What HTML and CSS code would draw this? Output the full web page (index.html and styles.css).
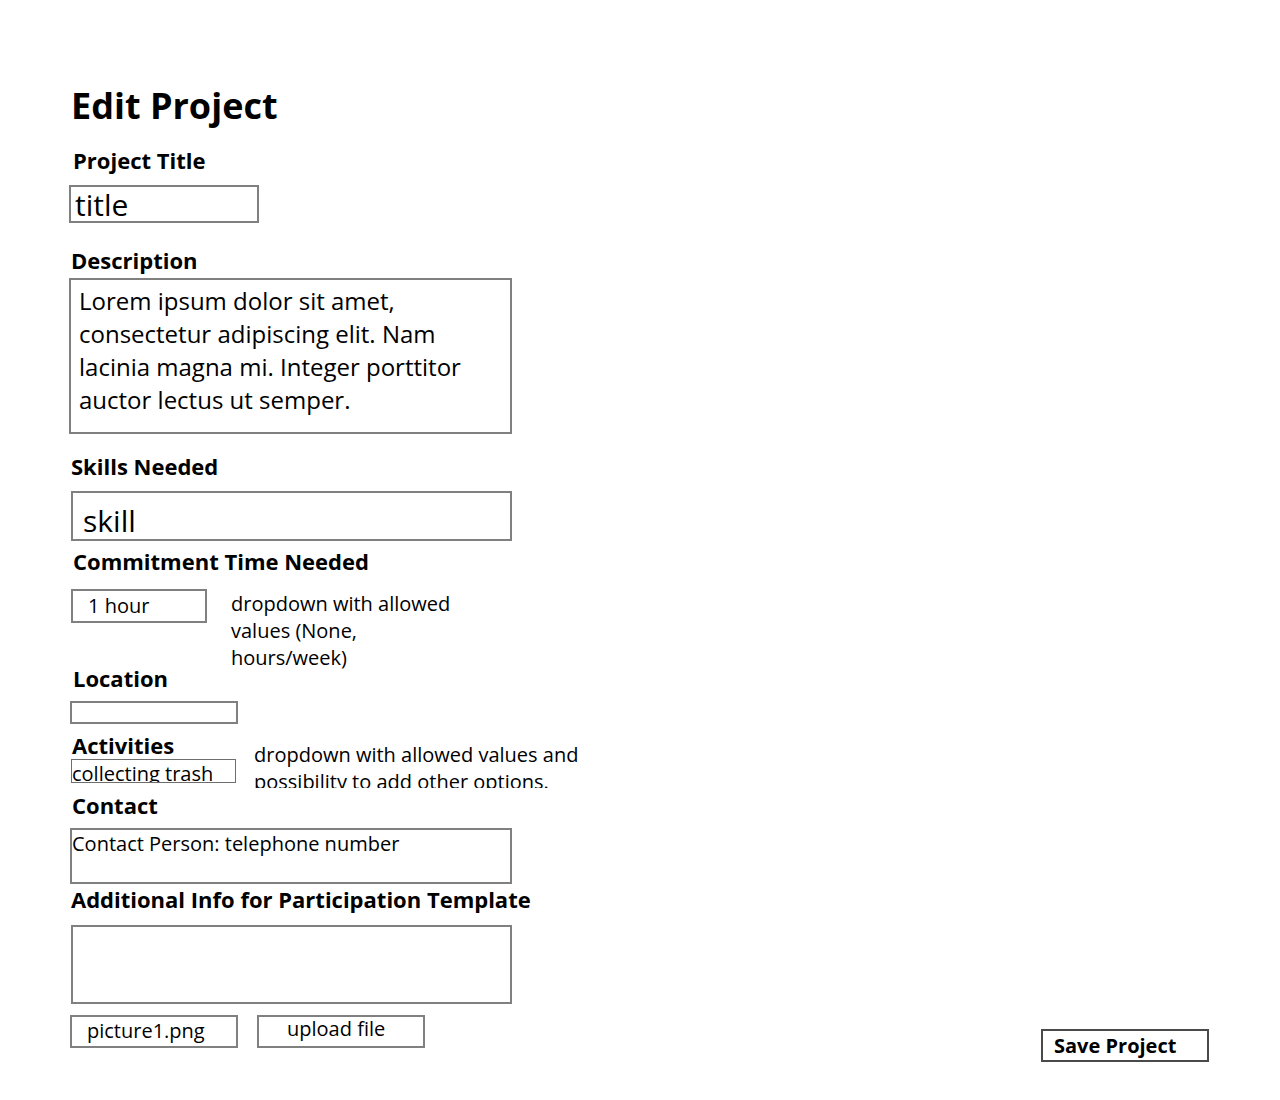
FILE: index.html
```html
<!DOCTYPE html>
<html lang="en">
<head>
<meta charset="utf-8">
<title>Edit Project</title>
<link rel="stylesheet" href="styles.css">
</head>
<body>
<main class="page">
  <h1 class="heading">Edit Project</h1>

  <div class="label lbl-project">Project Title</div>
  <div class="field f-title">title</div>

  <div class="label lbl-desc">Description</div>
  <div class="field f-desc">Lorem ipsum dolor sit amet, consectetur adipiscing elit. Nam lacinia magna mi. Integer porttitor auctor lectus ut semper.</div>

  <div class="label lbl-skills">Skills Needed</div>
  <div class="field f-skill">skill</div>

  <div class="label lbl-commit">Commitment Time Needed</div>
  <div class="commit-row">
    <div class="field f-hour">1 hour</div>
    <p class="note note-commit">dropdown with allowed values (None, hours/week)</p>
  </div>

  <div class="label lbl-loc">Location</div>
  <div class="field f-loc"></div>

  <div class="activities">
    <div class="act-col">
      <div class="label lbl-act">Activities</div>
      <div class="field f-act">collecting trash</div>
    </div>
    <p class="note note-act">dropdown with allowed values and possibility to add other options.</p>
  </div>

  <div class="label lbl-contact">Contact</div>
  <div class="field f-contact">Contact Person: telephone number</div>

  <div class="label lbl-add">Additional Info for Participation Template</div>
  <div class="field f-add"></div>

  <div class="bottom-row">
    <div class="field f-file">picture1.png</div>
    <div class="field f-upload">upload file</div>
    <div class="save">Save Project</div>
  </div>
</main>
</body>
</html>
```

FILE: styles.css
```css
* {
  box-sizing: border-box;
}

html, body {
  margin: 0;
  padding: 0;
  background: #ffffff;
}

body {
  font-family: "Open Sans", "Noto Sans", sans-serif;
  color: #000000;
  width: 1280px;
  height: 1100px;
  overflow: hidden;
}

.page {
  display: flex;
  flex-direction: column;
  align-items: flex-start;
  padding: 0 71px 0 69px;
}

.heading {
  margin: 83px 0 0 2px;
  font-size: 36px;
  font-weight: 700;
  line-height: 46px;
}

.label {
  font-size: 22px;
  font-weight: 700;
  line-height: 28px;
}

.field {
  border: 2px solid #808080;
  font-size: 20px;
  line-height: 27px;
}

.note {
  margin: 0;
  font-size: 20px;
  line-height: 27px;
}

/* Project title */
.lbl-project { margin: 17px 0 0 4px; }
.f-title {
  margin-top: 11px;
  width: 190px;
  height: 38px;
  font-size: 30px;
  line-height: 34px;
  padding: 1px 0 0 4px;
}

/* Description */
.lbl-desc { margin: 23px 0 0 2px; }
.f-desc {
  margin-top: 4px;
  width: 443px;
  height: 156px;
  font-size: 24px;
  line-height: 33px;
  padding: 4px 8px 0 8px;
}

/* Skills */
.lbl-skills { margin: 18px 0 0 2px; }
.f-skill {
  margin: 11px 0 0 2px;
  width: 441px;
  height: 50px;
  font-size: 30px;
  line-height: 38px;
  padding: 9px 0 0 10px;
}

/* Commitment */
.lbl-commit { margin: 6px 0 0 4px; }
.commit-row {
  display: flex;
  align-items: flex-start;
  margin-top: 14px;
  height: 75px;
}
.f-hour {
  margin-left: 2px;
  width: 136px;
  height: 34px;
  padding: 1px 0 0 15px;
}
.note-commit {
  width: 232px;
  margin: 1px 0 0 24px;
}

/* Location */
.lbl-loc { margin: 0 0 0 4px; }
.f-loc {
  margin: 9px 0 0 1px;
  width: 168px;
  height: 23px;
}

/* Activities */
.activities {
  display: flex;
  align-items: flex-start;
  margin-top: 8px;
  height: 56px;
}
.act-col {
  display: flex;
  flex-direction: column;
  width: 167px;
}
.lbl-act {
  margin-left: 3px;
  line-height: 27px;
}
.f-act {
  margin-left: 2px;
  width: 165px;
  height: 24px;
  border: 1px solid #6e6e6e;
  overflow: hidden;
  white-space: nowrap;
}
.note-act {
  width: 340px;
  height: 47px;
  overflow: hidden;
  margin: 9px 0 0 18px;
}

/* Contact */
.lbl-contact { margin: 3px 0 0 3px; }
.f-contact {
  margin: 9px 0 0 1px;
  width: 442px;
  height: 56px;
  padding: 0;
}

/* Additional */
.lbl-add { margin: 1px 0 0 2px; }
.f-add {
  margin: 12px 0 0 2px;
  width: 441px;
  height: 79px;
}

/* Bottom row */
.bottom-row {
  display: flex;
  align-items: flex-start;
  align-self: stretch;
  margin-top: 11px;
}
.f-file {
  margin-left: 1px;
  width: 168px;
  height: 33px;
  padding: 0 0 0 15px;
}
.f-upload {
  margin-left: 19px;
  width: 168px;
  height: 33px;
  line-height: 23px;
  padding: 0 0 0 28px;
}
.save {
  margin: 14px 0 0 auto;
  width: 168px;
  height: 33px;
  border: 2px solid #4a4a4a;
  font-size: 20px;
  font-weight: 700;
  line-height: 27px;
  padding: 1px 0 0 11px;
}
```
